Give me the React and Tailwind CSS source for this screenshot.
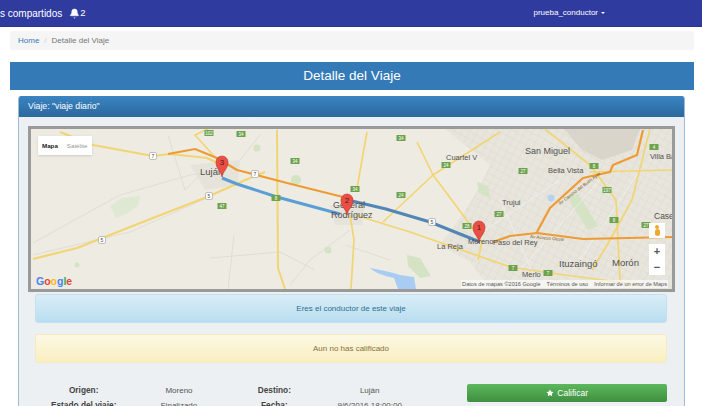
import { Bell, Star } from "lucide-react";

const shields = [
  [209, 133, "102"], [241, 134, "34"], [295, 161, "34"], [355, 189, "34"], [401, 138, "34"], [446, 165, "24"],
  [401, 195, "24"], [467, 226, "28"], [499, 214, "27"], [523, 171, "27"], [594, 166, "8"], [607, 190, "197"],
  [614, 220, "8"], [654, 147, "4"], [646, 225, "27"], [513, 268, "7"], [548, 273, "7"], [276, 198, "8"], [222, 206, "47"],
];
const white = [[153, 156, "7"], [255, 174, "7"], [209, 196, "5"], [102, 240, "5"], [432, 222, "5"]];
const places = [
  [200, 175, "Luján", 9.5], [333, 208, "General", 9], [331, 218, "Rodríguez", 9], [446, 160, "Cuartel V", 7.5],
  [525, 154, "San Miguel", 9], [548, 173, "Bella Vista", 7.5], [502, 205, "Trujui", 7.5], [437, 249, "La Reja", 7.5],
  [468, 244, "Moreno", 7.5], [493, 245, "Paso del Rey", 7.5], [559, 267, "Ituzaingó", 9.5], [612, 266, "Morón", 9.5],
  [522, 277, "Merlo", 7.5], [650, 159, "Villa Ba", 7.5], [654, 219, "Case", 8.5],
];

function Marker({ x, y, n }) {
  return (
    <g transform={`translate(${x} ${y})`}>
      <path d="M0 0 C-1 -6 -6 -8 -6 -15 A6 6 0 1 1 6 -15 C6 -8 1 -6 0 0 Z" fill="#ea4f45" stroke="#b8322b" strokeWidth="0.6" />
      <text x="0" y="-12.5" textAnchor="middle" fontSize="8" fill="#5c1512" fontFamily="Liberation Sans, sans-serif">{n}</text>
    </g>
  );
}

function RouteMap() {
  return (
    <svg viewBox="31 129 641 160" className="block h-[160px] w-[641px]">
      <defs>
        <pattern id="grid" width="7" height="7" patternUnits="userSpaceOnUse" patternTransform="rotate(28)">
          <rect width="7" height="7" fill="#e8e5dc" />
          <path d="M0 0H7M0 0V7" stroke="#dcd8ce" strokeWidth="0.8" />
        </pattern>
      </defs>
      <rect x="31" y="129" width="641" height="160" fill="#eeebe3" />

      {/* urban area */}
      <path d="M445 129 L672 129 L672 289 L490 289 L470 262 L440 245 L462 215 L478 190 L490 165 Z" fill="url(#grid)" />
      <path d="M564 129 L640 129 L632 150 L602 160 L582 150 Z" fill="#d9d5cb" />
      <path d="M190 165 L240 160 L238 185 L205 190 Z M330 205 L365 205 L362 225 L335 225 Z" fill="#e6e3da" />

      {/* parks and water */}
      <g fill="#d3e3c3">
        <path d="M567 197 L578 194 L598 226 L588 230 Z" />
        <path d="M407 255 L420 258 L431 276 L420 278 L408 266 Z" />
        <path d="M477 182 L488 186 L490 198 L479 193 Z" />
        <path d="M110 206 L122 198 L140 196 L138 206 L126 214 L116 218 Z" fill="#dfe8d2" />
        <circle cx="257" cy="148" r="3.5" /><circle cx="296" cy="180" r="5" /><circle cx="328" cy="250" r="3.5" /><circle cx="77" cy="265" r="2.5" />
      </g>
      <path d="M370 268 C380 270 392 272 400 275 L414 277 L416 289 L398 289 L394 278 C386 276 376 274 370 268 Z" fill="#a9cdf2" />
      <circle cx="551" cy="198" r="3.5" fill="#b4d3f0" />

      {/* small roads */}
      <g fill="none" stroke="#dedbd2" strokeWidth="0.9">
        <path d="M33 243 L120 195 L190 175 L222 170 M33 255 L130 232 L207 198" />
        <path d="M168 135 L185 190 L200 175 M234 235 L228 289 M210 258 L280 252 L315 270" />
        <path d="M350 230 L310 260 L290 285 M345 245 L390 260 M240 160 L260 135" />
      </g>
      <g fill="none" stroke="#fff" strokeWidth="0.8" opacity="0.5">
        <path d="M500 200 L540 289 M600 180 L520 270 M640 170 L580 260 M470 240 L560 180" />
      </g>

      {/* main roads */}
      <g fill="none" stroke="#f2d573" strokeWidth="1.7" strokeLinejoin="round">
        <path d="M33 259 L77 248 L153 218 L207 197 L250 178 L265 172" strokeWidth="2.2" />
        <path d="M60 132 L93 145 L153 156 L170 154 L207 158 L222 165" strokeWidth="2" />
        <path d="M277 130 L278 268 L285 289" strokeWidth="2" />
        <path d="M355 215 L410 232 L510 267 L550 273 L640 285" />
        <path d="M367 132 L357 188 M350 215 L354 240 L351 289" />
        <path d="M417 142 L433 175 L463 215 L482 242 L478 260" />
        <path d="M500 132 L433 175 L383 222" />
        <path d="M545 129 L590 165 L616 200 L618 240 L620 280" />
        <path d="M650 129 L632 200 L610 240 L592 270" />
        <path d="M590 172 L672 170" />
        <path d="M222 165 L195 135 L208 129" />
      </g>
      <g fill="none" stroke="#ee9b34" strokeWidth="2.2" strokeLinejoin="round">
        <path d="M168 154 L195 149 L217 158 L237 170 L287 183 L343 197 L352 200" />
        <path d="M643 130 L637 155 L613 165 L610 172 L583 178 L550 208 L537 232" />
        <path d="M493 242 L510 236 L537 233 L583 239 L672 237" />
      </g>

      {/* route */}
      <path d="M222 178 L237 184 L277 197 L340 214" fill="none" stroke="#5b9ed6" strokeWidth="3" />
      <path d="M352 201 L386 209 L430 222 L480 242" fill="none" stroke="#5186b5" strokeWidth="3" />

      {/* road shields */}
      {shields.map(([x, y, t], i) => (
        <g key={i}>
          <rect x={x - 4.5} y={y - 3} width="9" height="6" fill="#6da34d" />
          <text x={x} y={y + 2} textAnchor="middle" fontSize="4.5" fill="#fff" fontFamily="Liberation Sans, sans-serif">{t}</text>
        </g>
      ))}
      {white.map(([x, y, t], i) => (
        <g key={i}>
          <rect x={x - 3.5} y={y - 3.5} width="7" height="7" rx="1.5" fill="#fff" stroke="#9a9a9a" strokeWidth="0.6" />
          <text x={x} y={y + 2} textAnchor="middle" fontSize="5" fill="#444" fontFamily="Liberation Sans, sans-serif">{t}</text>
        </g>
      ))}
      {places.map(([x, y, t, s], i) => (
        <text key={i} x={x} y={y} fontSize={s} fill="#505050" fontFamily="Liberation Sans, sans-serif">{t}</text>
      ))}
      <text x="530" y="238" fontSize="4.5" fill="#7a5a20" transform="rotate(5 530 238)" fontFamily="Liberation Sans, sans-serif">Av Acceso Oeste</text>
      <text x="560" y="205" fontSize="4.5" fill="#7a5a20" transform="rotate(-37 560 205)" fontFamily="Liberation Sans, sans-serif">Av Camino del Buen Ayre</text>

      <Marker x={222} y={177} n="3" />
      <Marker x={347} y={215} n="2" />
      <Marker x={479} y={242} n="1" />

      {/* google logo */}
      <text x="36" y="285" fontSize="10.5" fontWeight="700" fontFamily="Liberation Sans, sans-serif">
        <tspan fill="#4285f4">G</tspan><tspan fill="#ea4335">o</tspan><tspan fill="#fbbc05">o</tspan><tspan fill="#4285f4">g</tspan><tspan fill="#34a853">l</tspan><tspan fill="#ea4335">e</tspan>
      </text>
    </svg>
  );
}

function Row({ a, b, c, d }) {
  return (
    <div className="grid h-[15px] grid-cols-4 items-center text-center text-[8px] text-[#555]">
      <b className="text-[8.3px] text-[#444]">{a}</b>
      <span>{b}</span>
      <b className="text-[8.3px] text-[#444]">{c}</b>
      <span>{d}</span>
    </div>
  );
}

export default function App() {
  return (
    <div className="h-[406px] w-[702px] overflow-hidden bg-white font-['Liberation_Sans',Arial,sans-serif]">
      <nav className="flex h-[27px] items-center justify-between border-b border-[#2a3690] bg-[#2f3b9e] pr-[97px] text-white">
        <div className="flex items-center text-[10px]">
          <span>s compartidos</span>
          <Bell size={11} fill="#fff" strokeWidth={1} className="ml-[7px]" />
          <span className="text-[9.5px]">2</span>
        </div>
        <div className="flex items-center gap-[3px] text-[8px]">
          prueba_conductor
          <span className="h-0 w-0 border-x-[2px] border-t-[2px] border-x-transparent border-t-white" />
        </div>
      </nav>

      <div className="mx-[10px] mt-[4px] flex h-[19px] w-[684px] items-center rounded-[2px] bg-[#f5f5f5] px-2 text-[8px] text-[#777]">
        <span className="text-[#337ab7]">Home</span>
        <span className="mx-[5px] text-[#ccc]">/</span>
        <span>Detalle del Viaje</span>
      </div>

      <h1 className="mx-[10px] mt-[12px] flex h-[28px] w-[684px] items-center justify-center bg-[#337ab7] text-[13.5px] text-white">
        Detalle del Viaje
      </h1>

      <section className="ml-[18px] mt-[6px] w-[667px] overflow-hidden rounded-t-[3px] border-x border-[#9dbbd6] bg-[#ecf0f2]">
        <div className="flex h-[21px] items-center bg-linear-to-b from-[#3a85c2] to-[#2b689e] px-[9px] text-[8.7px] text-white">
          Viaje: "viaje diario"
        </div>
        <div className="px-[9px] pt-[9px]">
          <div className="relative w-[647px] border-[3px] border-[#9a9a9a]">
            <RouteMap />
            <div className="absolute left-[7px] top-[7px] flex h-[19px] w-[54px] items-center gap-[9px] bg-white px-[4px] text-[6.2px] shadow-sm">
              <b className="text-[#222]">Mapa</b>
              <span className="text-[#999]">Satélite</span>
            </div>
            <div className="absolute left-[618px] top-[94px] flex h-[15px] w-[16px] flex-col items-center justify-center bg-white">
              <span className="block h-[4px] w-[4px] rounded-full bg-[#f0a830]" />
              <span className="block h-[7px] w-[5px] rounded-full bg-[#f0a830]" />
            </div>
            <div className="absolute left-[618px] top-[115px] flex h-[31px] w-[16px] flex-col items-center justify-around bg-white text-[11px] font-bold leading-none text-[#555]">
              <span>+</span>
              <span>−</span>
            </div>
            <div className="absolute bottom-[1px] right-[4px] flex gap-[6px] bg-white/60 px-[1px] text-[5.6px] text-[#555]">
              <span>Datos de mapas ©2016 Google</span>
              <span>Términos de uso</span>
              <span>Informar de un error de Maps</span>
            </div>
          </div>

          <div className="ml-[7px] mr-[8px] mt-[2px]">
            <div className="flex h-[29px] items-center justify-center rounded-[3px] border border-[#c4e0ee] bg-linear-to-b from-[#d9edf7] to-[#b9def0] text-[8px] text-[#31708f]">
              Eres el conductor de este viaje
            </div>
            <div className="mt-[11px] flex h-[29px] items-center justify-center rounded-[3px] border border-[#f5eac0] bg-linear-to-b from-[#fcf8e3] to-[#f8efc0] text-[8px] text-[#8a6d3b]">
              Aun no has calificado
            </div>

            <div className="mt-[20px] flex items-start">
              <div className="ml-[1px] w-[382px]">
                <Row a="Origen:" b="Moreno" c="Destino:" d="Luján" />
                <Row a="Estado del viaje:" b="Finalizado" c="Fecha:" d="9/6/2016 18:00:00" />
              </div>
              <button className="ml-[50px] mt-[1px] flex h-[18px] w-[200px] items-center justify-center gap-[3px] rounded-[2px] bg-linear-to-b from-[#5cb85c] to-[#3f8f3f] text-[8.5px] text-white">
                <Star size={8} fill="#fff" strokeWidth={0} />
                Calificar
              </button>
            </div>
          </div>
        </div>
      </section>
    </div>
  );
}
